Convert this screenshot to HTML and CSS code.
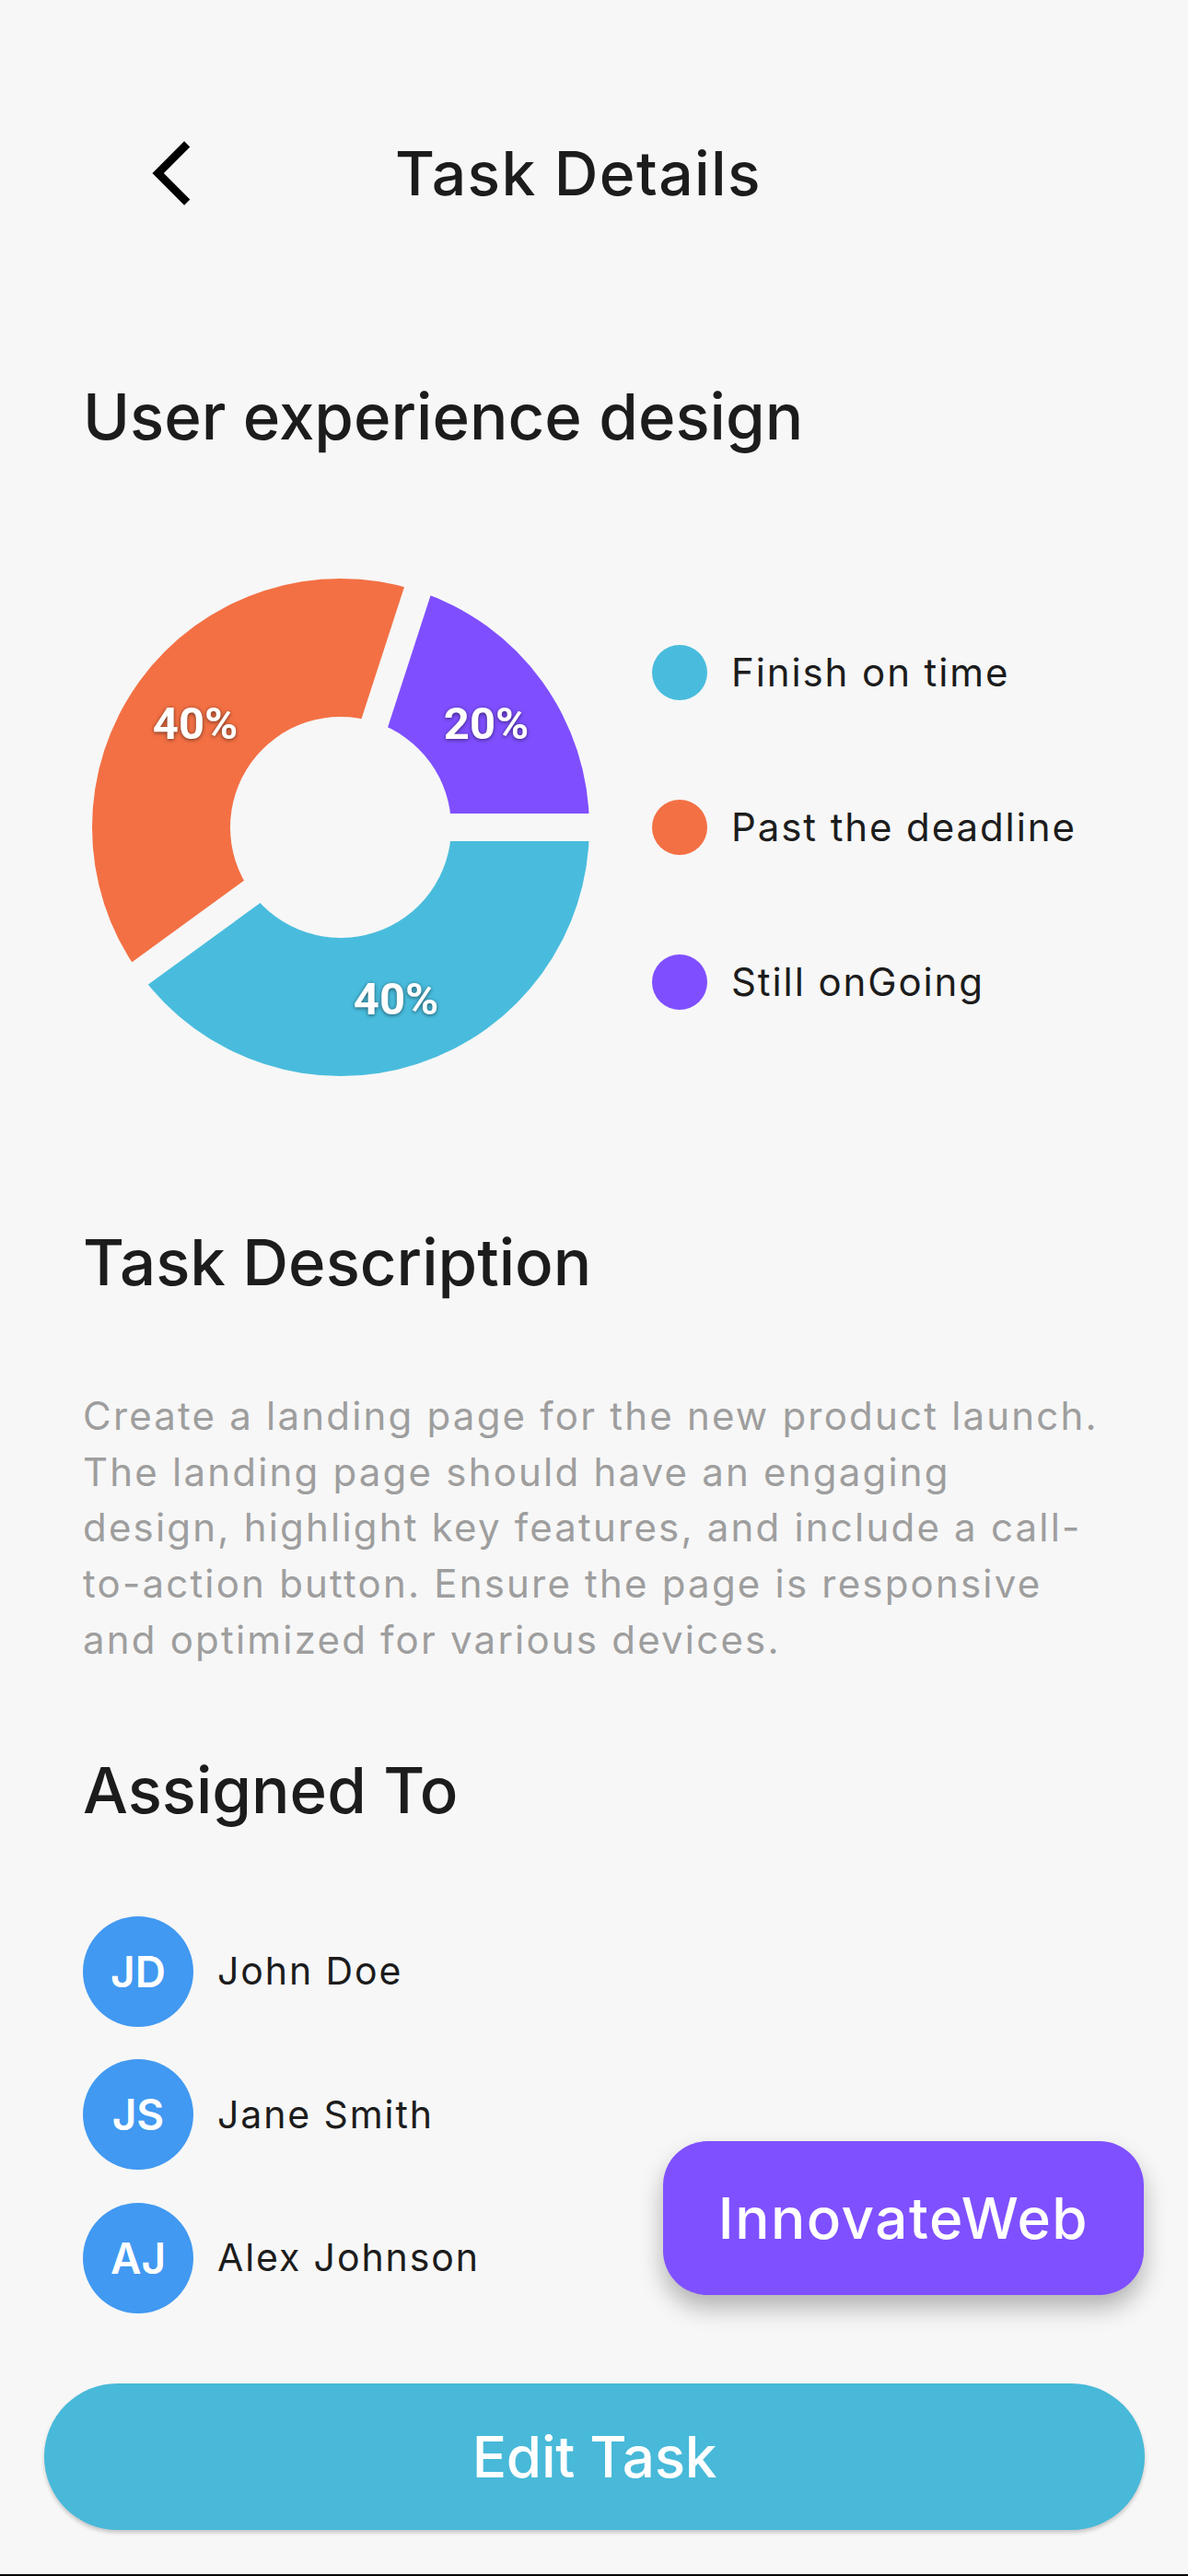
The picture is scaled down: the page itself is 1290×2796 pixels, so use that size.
FILE: index.html
```html
<!DOCTYPE html>
<html lang="en">
<head>
<meta charset="utf-8">
<title>Task Details</title>
<link rel="stylesheet" href="styles.css">
</head>
<body>
<div class="screen">
  <header class="header">
    <svg class="back" viewBox="0 0 24 24" width="84" height="84" aria-hidden="true">
      <path d="M17.51 3.87L15.73 2.1 5.84 12l9.9 9.9 1.77-1.77L9.38 12l8.13-8.13z" fill="#000"/>
    </svg>
    <h1 class="title">Task Details</h1>
  </header>

  <main class="content">
    <h2 class="heading heading-first">User experience design</h2>

    <section class="chart-row">
      <svg class="donut" viewBox="0 0 540 540" width="540" height="540">
        <path class="slice-blue" d="M540,270 A270,270 0 0 1 51.57,428.70 L172.92,340.53 A120,120 0 0 0 390,270 Z"/>
        <path class="slice-orange" d="M51.57,428.70 A270,270 0 0 1 353.43,13.21 L307.08,155.87 A120,120 0 0 0 172.92,340.53 Z"/>
        <path class="slice-purple" d="M353.43,13.21 A270,270 0 0 1 540,270 L390,270 A120,120 0 0 0 307.08,155.87 Z"/>
        <line class="gap" x1="270" y1="270" x2="580" y2="270"/>
        <line class="gap" x1="270" y1="270" x2="19.2" y2="452.3"/>
        <line class="gap" x1="270" y1="270" x2="365.8" y2="-24.8"/>
        <text class="pct" x="112" y="157">40%</text>
        <text class="pct" x="428" y="157">20%</text>
        <text class="pct" x="330" y="456">40%</text>
      </svg>

      <ul class="legend">
        <li class="legend-item"><span class="dot dot-blue"></span><span>Finish on time</span></li>
        <li class="legend-item"><span class="dot dot-orange"></span><span>Past the deadline</span></li>
        <li class="legend-item"><span class="dot dot-purple"></span><span>Still onGoing</span></li>
      </ul>
    </section>

    <h2 class="heading heading-desc">Task Description</h2>
    <p class="desc">
      <span class="line">Create a landing page for the new product launch.</span>
      <span class="line">The landing page should have an engaging</span>
      <span class="line">design, highlight key features, and include a call-</span>
      <span class="line">to-action button. Ensure the page is responsive</span>
      <span class="line">and optimized for various devices.</span>
    </p>

    <h2 class="heading heading-assigned">Assigned To</h2>
    <ul class="people">
      <li class="person"><span class="avatar">JD</span><span class="name">John Doe</span></li>
      <li class="person"><span class="avatar">JS</span><span class="name">Jane Smith</span></li>
      <li class="person"><span class="avatar">AJ</span><span class="name">Alex Johnson</span></li>
    </ul>
  </main>

  <button class="fab" type="button">InnovateWeb</button>

  <button class="edit" type="button">Edit Task</button>
</div>
</body>
</html>
```

FILE: styles.css
```css
* { box-sizing: border-box; }

html, body {
  margin: 0;
  padding: 0;
  background: #f7f7f7;
}

.screen {
  position: relative;
  width: 1290px;
  height: 2796px;
  overflow: hidden;
  background: #f7f7f7;
  border-bottom: 2px solid #000;
  font-family: "Inter", "Noto Sans", sans-serif;
  color: #1c1c1c;
}

/* Header */
.header {
  display: flex;
  align-items: center;
  padding: 146px 0 0 145px;
}

.back {
  display: block;
  flex: none;
}

.title {
  margin: 0 0 0 200px;
  font-size: 66px;
  line-height: 1;
  font-weight: 500;
  letter-spacing: 1.4px;
  color: #1c1c1c;
}

/* Content */
.content {
  padding-left: 90px;
}

.heading {
  margin: 0;
  font-size: 69px;
  line-height: 1;
  font-weight: 500;
  letter-spacing: 0;
  color: #1c1c1c;
}

.heading-first { margin-top: 188px; }
.heading-desc { margin-top: 168px; }
.heading-assigned { margin-top: 98px; }

/* Chart */
.chart-row {
  display: flex;
  align-items: center;
  margin-top: 141px;
}

.donut {
  display: block;
  margin-left: 10px;
  flex: none;
  overflow: visible;
}

.slice-blue { fill: #49bcdd; }
.slice-orange { fill: #f37044; }
.slice-purple { fill: #7f4fff; }

.gap {
  stroke: #f7f7f7;
  stroke-width: 30;
  stroke-linecap: butt;
}

.pct {
  font-family: "Roboto", "Inter", sans-serif;
  font-size: 49px;
  font-weight: 700;
  fill: #ffffff;
  text-anchor: middle;
  dominant-baseline: central;
  filter: drop-shadow(0 1px 2px rgba(0, 0, 0, 0.55));
}

.legend {
  list-style: none;
  margin: 0 0 0 68px;
  padding: 0;
  display: flex;
  flex-direction: column;
  gap: 108px;
}

.legend-item {
  display: flex;
  align-items: center;
  gap: 26px;
  height: 60px;
  font-size: 42px;
  line-height: 1;
  letter-spacing: 1.9px;
  color: #1c1c1c;
}

.dot {
  width: 60px;
  height: 60px;
  border-radius: 50%;
  flex: none;
}

.dot-blue { background: #49bcdd; }
.dot-orange { background: #f37044; }
.dot-purple { background: #7f4fff; }

/* Description */
.desc {
  margin: 102px 0 0 0;
  font-size: 42px;
  line-height: 60.7px;
  letter-spacing: 2.2px;
  color: #9e9e9e;
}

.desc .line {
  display: block;
  white-space: nowrap;
}

/* People */
.people {
  list-style: none;
  margin: 102px 0 0 0;
  padding: 0;
  display: flex;
  flex-direction: column;
  gap: 35.5px;
}

.person {
  display: flex;
  align-items: center;
  gap: 26px;
  height: 120px;
}

.avatar {
  width: 120px;
  height: 120px;
  border-radius: 50%;
  background: #4199f1;
  color: #fff;
  display: flex;
  align-items: center;
  justify-content: center;
  font-size: 46px;
  font-weight: 600;
  flex: none;
}

.name {
  font-size: 41px;
  line-height: 1;
  letter-spacing: 1.9px;
  color: #1c1c1c;
}

/* Floating button */
.fab {
  position: absolute;
  left: 720px;
  top: 2324px;
  width: 522px;
  height: 167px;
  border: none;
  border-radius: 48px;
  background: #7f50ff;
  color: #fff;
  font-family: "Inter", "Noto Sans", sans-serif;
  font-size: 62px;
  font-weight: 500;
  letter-spacing: 1.5px;
  box-shadow: 0 14px 26px rgba(0, 0, 0, 0.28);
  padding: 0;
}

/* Edit button */
.edit {
  display: block;
  margin: 76px 0 0 48px;
  width: 1195px;
  height: 159px;
  border: none;
  border-radius: 80px;
  background: #48b9d9;
  color: #fff;
  font-family: "Inter", "Noto Sans", sans-serif;
  font-size: 62px;
  font-weight: 500;
  letter-spacing: -0.3px;
  box-shadow: 0 3px 4px rgba(0, 0, 0, 0.2);
  padding: 0;
}
```
